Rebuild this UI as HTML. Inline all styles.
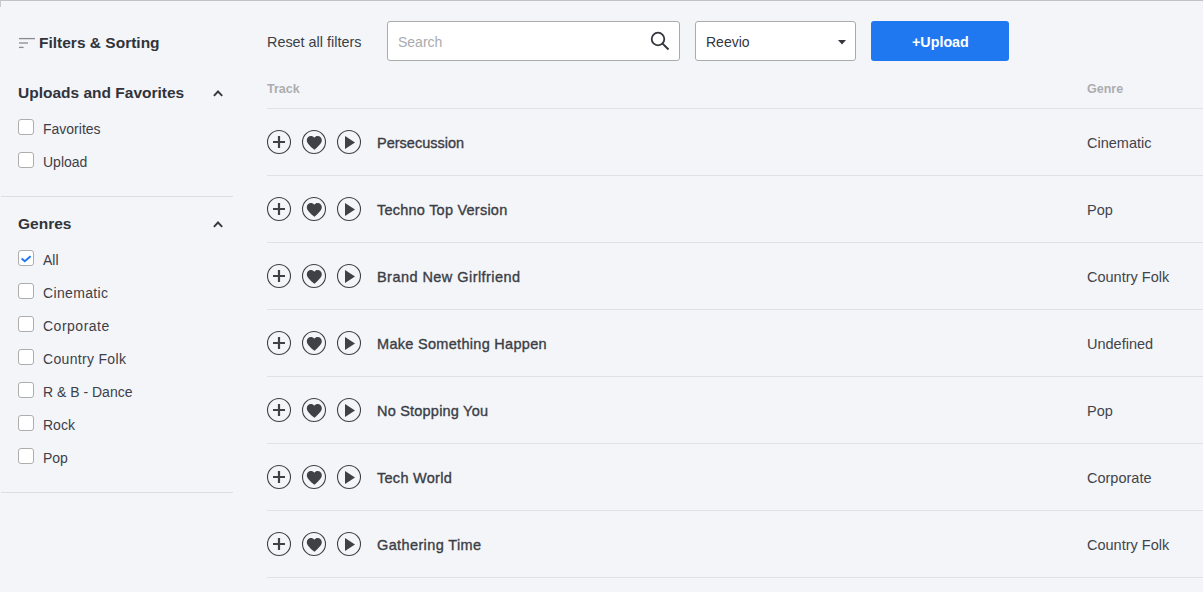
<!DOCTYPE html>
<html><head><meta charset="utf-8">
<style>
html,body{margin:0;padding:0;}
body{width:1203px;height:592px;overflow:hidden;background:#f4f5f9;position:relative;font-family:"Liberation Sans",sans-serif;color:#3b3e45;}
.a{position:absolute;white-space:nowrap;}
.topline{left:0;top:0;width:1203px;height:1px;background:#c1c2c7;}
.leftline{left:0;top:0;width:1px;height:7px;background:#c8c9cd;}
.t{line-height:20px;height:20px;}
.b{font-weight:bold;}
.hd{font-size:15.5px;font-weight:bold;color:#30333a;}
.lbl{font-size:14px;color:#3d4048;}
.cb{position:absolute;left:18px;width:14px;height:14px;border:1px solid #adadad;border-radius:3px;background:#fff;}
.div{position:absolute;left:1px;width:232px;height:1px;background:#dcdde2;}
.chev{position:absolute;left:212px;width:12px;height:9px;overflow:visible;}
.box{position:absolute;top:21px;height:38px;border:1px solid #ababab;border-radius:3px;background:#fff;}
.btn{position:absolute;left:871px;top:21px;width:138px;height:40px;background:#1f78f0;border-radius:3px;}
.rline{position:absolute;left:267px;width:936px;height:1px;background:#e0e1e5;}
.ico{position:absolute;width:26px;height:26px;}
.tn{font-size:14.5px;color:#3b3e45;-webkit-text-stroke:0.35px #3b3e45;}
.gn{font-size:14.5px;color:#41444a;}
</style></head><body>
<div class="a topline"></div>
<div class="a leftline"></div>

<!-- sidebar -->
<svg class="a" style="left:19px;top:37px" width="18" height="12" viewBox="0 0 18 12">
<rect x="0" y="0.95" width="16" height="1.3" fill="#8a8b8f"/>
<rect x="0" y="5.35" width="9" height="1.3" fill="#8a8b8f"/>
<rect x="0" y="9.75" width="4.6" height="1.3" fill="#8a8b8f"/>
</svg>
<div class="a t hd" style="left:39px;top:33px">Filters &amp; Sorting</div>

<div class="a t hd" style="left:18px;top:83px">Uploads and Favorites</div>
<svg class="chev" style="top:89px" viewBox="0 0 12 9"><path d="M1.9 6.9 L6 2.5 L10.2 6.9" fill="none" stroke="#363940" stroke-width="1.9"/></svg>
<div class="cb" style="top:119px"></div><div class="a t lbl" style="left:43px;top:119px">Favorites</div>
<div class="cb" style="top:152px"></div><div class="a t lbl" style="left:43px;top:152px">Upload</div>
<div class="div" style="top:196px"></div>

<div class="a t hd" style="left:18px;top:214px">Genres</div>
<svg class="chev" style="top:220px" viewBox="0 0 12 9"><path d="M1.9 6.9 L6 2.5 L10.2 6.9" fill="none" stroke="#363940" stroke-width="1.9"/></svg>
<div class="cb" style="top:250px"><svg style="position:absolute;left:2px;top:3px;overflow:visible" width="11" height="9" viewBox="0 0 11 9"><path d="M0.6 4.4 L3.8 7.2 L9.6 2.3" fill="none" stroke="#1f78f0" stroke-width="2"/></svg></div><div class="a t lbl" style="left:43px;top:250px">All</div>
<div class="cb" style="top:283px"></div><div class="a t lbl" style="left:43px;top:283px;letter-spacing:0.34px">Cinematic</div>
<div class="cb" style="top:316px"></div><div class="a t lbl" style="left:43px;top:316px;letter-spacing:0.5px">Corporate</div>
<div class="cb" style="top:349px"></div><div class="a t lbl" style="left:43px;top:349px;letter-spacing:0.32px">Country Folk</div>
<div class="cb" style="top:382px"></div><div class="a t lbl" style="left:43px;top:382px">R &amp; B - Dance</div>
<div class="cb" style="top:415px"></div><div class="a t lbl" style="left:43px;top:415px">Rock</div>
<div class="cb" style="top:448px"></div><div class="a t lbl" style="left:43px;top:448px">Pop</div>
<div class="div" style="top:492px"></div>

<!-- top bar -->
<div class="a t lbl" style="left:267px;top:32px;color:#3b3e45;font-size:14.4px">Reset all filters</div>
<div class="box" style="left:387px;width:291px"></div>
<div class="a t lbl" style="left:398px;top:32px;color:#a9abb0">Search</div>
<svg class="a" style="left:649px;top:30px" width="22" height="22" viewBox="0 0 22 22"><circle cx="9" cy="9" r="6.3" fill="none" stroke="#33363c" stroke-width="1.8"/><path d="M13.6 13.6 L19.5 19.5" stroke="#33363c" stroke-width="2"/></svg>
<div class="box" style="left:695px;width:159px"></div>
<div class="a t lbl" style="left:706px;top:32px;color:#33363c">Reevio</div>
<svg class="a" style="left:838px;top:40px" width="8" height="5" viewBox="0 0 8 5"><path d="M0 0 L8 0 L4 4.5 Z" fill="#33363c"/></svg>
<div class="btn"></div>
<div class="a t b" style="left:912px;top:32px;font-size:14.3px;color:#fff">+Upload</div>

<!-- table header -->
<div class="a t b" style="left:267px;top:79px;font-size:12.5px;color:#acadb0">Track</div>
<div class="a t b" style="left:1087px;top:79px;font-size:12.5px;color:#acadb0">Genre</div>
<div class="rline" style="top:108px"></div>

<div id="rows">
<svg class="a" style="left:266px;top:128px" width="100" height="28" viewBox="0 0 100 28"><circle cx="13" cy="14" r="11.5" fill="none" stroke="#3e4146" stroke-width="1.1"/>
<path d="M7 14 H19 M13 8 V20" stroke="#3e4146" stroke-width="2.2"/>
<circle cx="48" cy="14" r="11.5" fill="none" stroke="#3e4146" stroke-width="1.1"/>
<path transform="translate(39.3 5.85) scale(0.75)" d="M12 21.35l-1.45-1.32C5.4 15.36 2 12.28 2 8.5 2 5.42 4.42 3 7.5 3c1.74 0 3.41.81 4.5 2.09C13.09 3.81 14.76 3 16.5 3 19.58 3 22 5.42 22 8.5c0 3.78-3.4 6.86-8.55 11.54L12 21.35z" fill="#3e4146"/>
<circle cx="83" cy="14" r="11.5" fill="none" stroke="#3e4146" stroke-width="1.1"/>
<path d="M79 8 L89 14.5 L79 21 Z" fill="#3e4146"/></svg>
<div class="a t tn" style="left:377px;top:133px;letter-spacing:0px">Persecussion</div>
<div class="a t gn" style="left:1087px;top:133px">Cinematic</div>
<div class="rline" style="top:175px"></div>
<svg class="a" style="left:266px;top:195px" width="100" height="28" viewBox="0 0 100 28"><circle cx="13" cy="14" r="11.5" fill="none" stroke="#3e4146" stroke-width="1.1"/>
<path d="M7 14 H19 M13 8 V20" stroke="#3e4146" stroke-width="2.2"/>
<circle cx="48" cy="14" r="11.5" fill="none" stroke="#3e4146" stroke-width="1.1"/>
<path transform="translate(39.3 5.85) scale(0.75)" d="M12 21.35l-1.45-1.32C5.4 15.36 2 12.28 2 8.5 2 5.42 4.42 3 7.5 3c1.74 0 3.41.81 4.5 2.09C13.09 3.81 14.76 3 16.5 3 19.58 3 22 5.42 22 8.5c0 3.78-3.4 6.86-8.55 11.54L12 21.35z" fill="#3e4146"/>
<circle cx="83" cy="14" r="11.5" fill="none" stroke="#3e4146" stroke-width="1.1"/>
<path d="M79 8 L89 14.5 L79 21 Z" fill="#3e4146"/></svg>
<div class="a t tn" style="left:377px;top:200px;letter-spacing:0.23px">Techno Top Version</div>
<div class="a t gn" style="left:1087px;top:200px">Pop</div>
<div class="rline" style="top:242px"></div>
<svg class="a" style="left:266px;top:262px" width="100" height="28" viewBox="0 0 100 28"><circle cx="13" cy="14" r="11.5" fill="none" stroke="#3e4146" stroke-width="1.1"/>
<path d="M7 14 H19 M13 8 V20" stroke="#3e4146" stroke-width="2.2"/>
<circle cx="48" cy="14" r="11.5" fill="none" stroke="#3e4146" stroke-width="1.1"/>
<path transform="translate(39.3 5.85) scale(0.75)" d="M12 21.35l-1.45-1.32C5.4 15.36 2 12.28 2 8.5 2 5.42 4.42 3 7.5 3c1.74 0 3.41.81 4.5 2.09C13.09 3.81 14.76 3 16.5 3 19.58 3 22 5.42 22 8.5c0 3.78-3.4 6.86-8.55 11.54L12 21.35z" fill="#3e4146"/>
<circle cx="83" cy="14" r="11.5" fill="none" stroke="#3e4146" stroke-width="1.1"/>
<path d="M79 8 L89 14.5 L79 21 Z" fill="#3e4146"/></svg>
<div class="a t tn" style="left:377px;top:267px;letter-spacing:0.45px">Brand New Girlfriend</div>
<div class="a t gn" style="left:1087px;top:267px">Country Folk</div>
<div class="rline" style="top:309px"></div>
<svg class="a" style="left:266px;top:329px" width="100" height="28" viewBox="0 0 100 28"><circle cx="13" cy="14" r="11.5" fill="none" stroke="#3e4146" stroke-width="1.1"/>
<path d="M7 14 H19 M13 8 V20" stroke="#3e4146" stroke-width="2.2"/>
<circle cx="48" cy="14" r="11.5" fill="none" stroke="#3e4146" stroke-width="1.1"/>
<path transform="translate(39.3 5.85) scale(0.75)" d="M12 21.35l-1.45-1.32C5.4 15.36 2 12.28 2 8.5 2 5.42 4.42 3 7.5 3c1.74 0 3.41.81 4.5 2.09C13.09 3.81 14.76 3 16.5 3 19.58 3 22 5.42 22 8.5c0 3.78-3.4 6.86-8.55 11.54L12 21.35z" fill="#3e4146"/>
<circle cx="83" cy="14" r="11.5" fill="none" stroke="#3e4146" stroke-width="1.1"/>
<path d="M79 8 L89 14.5 L79 21 Z" fill="#3e4146"/></svg>
<div class="a t tn" style="left:377px;top:334px;letter-spacing:0.3px">Make Something Happen</div>
<div class="a t gn" style="left:1087px;top:334px">Undefined</div>
<div class="rline" style="top:376px"></div>
<svg class="a" style="left:266px;top:396px" width="100" height="28" viewBox="0 0 100 28"><circle cx="13" cy="14" r="11.5" fill="none" stroke="#3e4146" stroke-width="1.1"/>
<path d="M7 14 H19 M13 8 V20" stroke="#3e4146" stroke-width="2.2"/>
<circle cx="48" cy="14" r="11.5" fill="none" stroke="#3e4146" stroke-width="1.1"/>
<path transform="translate(39.3 5.85) scale(0.75)" d="M12 21.35l-1.45-1.32C5.4 15.36 2 12.28 2 8.5 2 5.42 4.42 3 7.5 3c1.74 0 3.41.81 4.5 2.09C13.09 3.81 14.76 3 16.5 3 19.58 3 22 5.42 22 8.5c0 3.78-3.4 6.86-8.55 11.54L12 21.35z" fill="#3e4146"/>
<circle cx="83" cy="14" r="11.5" fill="none" stroke="#3e4146" stroke-width="1.1"/>
<path d="M79 8 L89 14.5 L79 21 Z" fill="#3e4146"/></svg>
<div class="a t tn" style="left:377px;top:401px;letter-spacing:0.21px">No Stopping You</div>
<div class="a t gn" style="left:1087px;top:401px">Pop</div>
<div class="rline" style="top:443px"></div>
<svg class="a" style="left:266px;top:463px" width="100" height="28" viewBox="0 0 100 28"><circle cx="13" cy="14" r="11.5" fill="none" stroke="#3e4146" stroke-width="1.1"/>
<path d="M7 14 H19 M13 8 V20" stroke="#3e4146" stroke-width="2.2"/>
<circle cx="48" cy="14" r="11.5" fill="none" stroke="#3e4146" stroke-width="1.1"/>
<path transform="translate(39.3 5.85) scale(0.75)" d="M12 21.35l-1.45-1.32C5.4 15.36 2 12.28 2 8.5 2 5.42 4.42 3 7.5 3c1.74 0 3.41.81 4.5 2.09C13.09 3.81 14.76 3 16.5 3 19.58 3 22 5.42 22 8.5c0 3.78-3.4 6.86-8.55 11.54L12 21.35z" fill="#3e4146"/>
<circle cx="83" cy="14" r="11.5" fill="none" stroke="#3e4146" stroke-width="1.1"/>
<path d="M79 8 L89 14.5 L79 21 Z" fill="#3e4146"/></svg>
<div class="a t tn" style="left:377px;top:468px;letter-spacing:0.28px">Tech World</div>
<div class="a t gn" style="left:1087px;top:468px">Corporate</div>
<div class="rline" style="top:510px"></div>
<svg class="a" style="left:266px;top:530px" width="100" height="28" viewBox="0 0 100 28"><circle cx="13" cy="14" r="11.5" fill="none" stroke="#3e4146" stroke-width="1.1"/>
<path d="M7 14 H19 M13 8 V20" stroke="#3e4146" stroke-width="2.2"/>
<circle cx="48" cy="14" r="11.5" fill="none" stroke="#3e4146" stroke-width="1.1"/>
<path transform="translate(39.3 5.85) scale(0.75)" d="M12 21.35l-1.45-1.32C5.4 15.36 2 12.28 2 8.5 2 5.42 4.42 3 7.5 3c1.74 0 3.41.81 4.5 2.09C13.09 3.81 14.76 3 16.5 3 19.58 3 22 5.42 22 8.5c0 3.78-3.4 6.86-8.55 11.54L12 21.35z" fill="#3e4146"/>
<circle cx="83" cy="14" r="11.5" fill="none" stroke="#3e4146" stroke-width="1.1"/>
<path d="M79 8 L89 14.5 L79 21 Z" fill="#3e4146"/></svg>
<div class="a t tn" style="left:377px;top:535px;letter-spacing:0.38px">Gathering Time</div>
<div class="a t gn" style="left:1087px;top:535px">Country Folk</div>
<div class="rline" style="top:577px"></div>
</div>
</body></html>
